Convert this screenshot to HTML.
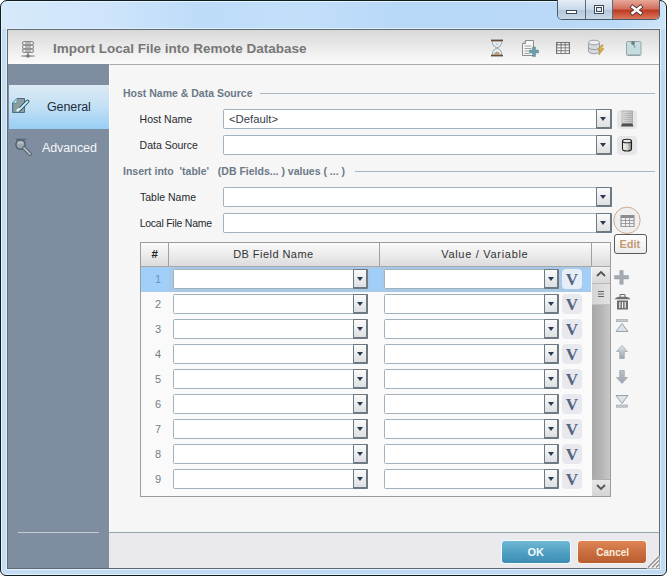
<!DOCTYPE html>
<html><head><meta charset="utf-8"><style>
*{box-sizing:border-box;margin:0;padding:0}
html,body{width:667px;height:576px;overflow:hidden;background:#fff;font-family:"Liberation Sans",sans-serif}
.a{position:absolute}
.t{position:absolute;white-space:nowrap}
.inp{position:absolute;height:20px;border:1px solid #9fb2be;border-radius:1.5px;background:#fff}
.dd{position:absolute;border:1px solid #6d7983;border-right-width:2px;border-bottom-width:2px;border-radius:1px;background:linear-gradient(#fbfbfb,#dedfe2)}
.dd i{position:absolute;left:2.5px;border-left:3.8px solid transparent;border-right:3.8px solid transparent;border-top:4.5px solid #2a3a52}
.vb{position:absolute;width:20px;height:20px;border-radius:4px;background:#e4e7ed;font-family:"Liberation Serif",serif;font-weight:bold;font-size:17px;line-height:20px;text-align:center;color:#56637d}
</style></head><body>
<div class="a" style="left:0px;top:0px;width:667px;height:576px;border:1px solid #101c20;border-radius:7px 7px 6px 6px;box-shadow:inset 0 0 0 1px #e4f4fc;background:linear-gradient(90deg,#c4ddf4,#bed9f3 50%,#c0daf1)"></div>
<div class="a" style="left:2px;top:2px;width:663px;height:27px;border-radius:5px 5px 0 0;background:linear-gradient(90deg,#d6e9fb 0%,#cfe5fb 15%,#bddcf9 30%,#c2dffa 45%,#b8d8f8 60%,#bad9f7 92%,#cfe4f8 100%)"></div>
<div class="a" style="left:7px;top:29px;width:653px;height:540px;border:1px solid #5e6a76;box-shadow:0 0 0 1px #e2f0fc;background:#f4f4f4"></div>
<div class="a" style="left:8px;top:30px;width:651px;height:34px;background:linear-gradient(#d8d8d8,#f3f3f3 75%,#fafafa)"></div>
<div class="a" style="left:8px;top:64px;width:101px;height:504px;background:#7e8d9f"></div>
<div class="a" style="left:109px;top:64px;width:550px;height:468px;background:#f6f6f6;border-top:1px solid #a9a9a9;border-left:1px solid #fdfdfd"></div>
<div class="a" style="left:109px;top:532px;width:550px;height:36px;background:#eaeaee;border-top:1px solid #97a3ad"></div>
<div class="a" style="left:557px;top:0px;width:103px;height:20px;border:1px solid #4b5a6a;border-top:none;border-radius:0 0 5px 5px;overflow:hidden">
<div class="a" style="left:0;top:0;width:27px;height:19px;background:linear-gradient(#e6eef7,#c9d8e8 50%,#b3c6da 51%,#c8d8e8)"></div>
<div class="a" style="left:27px;top:0;width:1px;height:19px;background:#5b6b7b"></div>
<div class="a" style="left:28px;top:0;width:26px;height:19px;background:linear-gradient(#e6eef7,#c9d8e8 50%,#b3c6da 51%,#c8d8e8)"></div>
<div class="a" style="left:54px;top:0;width:1px;height:19px;background:#5b6b7b"></div>
<div class="a" style="left:55px;top:0;width:47px;height:19px;background:linear-gradient(#e8a898,#d2705e 45%,#bf3b22 55%,#d9785c)"></div>
<div class="a" style="left:8px;top:10px;width:11px;height:4px;background:#fff;border:1px solid #3b4a5a"></div>
<div class="a" style="left:36px;top:5px;width:10px;height:9px;border:1px solid #3b4a5a;background:#fff"></div>
<div class="a" style="left:38px;top:7px;width:6px;height:5px;border:1px solid #3b4a5a;background:#dfe8f0"></div>
<svg class="a" style="left:70px;top:3px" width="17" height="14" viewBox="0 0 17 14"><path d="M4.5 4L12.5 10M12.5 4L4.5 10" stroke="#5a3a32" stroke-width="4.2" stroke-linecap="square"/><path d="M4.5 4L12.5 10M12.5 4L4.5 10" stroke="#fff" stroke-width="2.4" stroke-linecap="square"/></svg>
</div>
<div class="t" style="left:53px;top:41.97px;font-size:13.5px;line-height:13.5px;color:#777;font-weight:bold;">Import Local File into Remote Database</div>
<svg class="a" style="left:19px;top:40px" width="20" height="20" viewBox="0 0 20 20">
<g stroke="#8a8a8a" stroke-width="1"><rect x="3.5" y="1.5" width="11" height="3.4" rx="1.2" fill="#b4b4b4"/>
<rect x="3.5" y="5.3" width="11" height="3.4" rx="1.2" fill="#b4b4b4"/>
<rect x="3.5" y="9.1" width="11" height="3.4" rx="1.2" fill="#b4b4b4"/></g>
<g fill="#fff"><circle cx="5.3" cy="3.2" r=".9"/><circle cx="12.7" cy="3.2" r=".9"/><circle cx="5.3" cy="7" r=".9"/><circle cx="12.7" cy="7" r=".9"/><circle cx="5.3" cy="10.8" r=".9"/><circle cx="12.7" cy="10.8" r=".9"/></g>
<rect x="8.4" y="12.5" width="1.4" height="2.5" fill="#888"/>
<ellipse cx="9" cy="16" rx="7.5" ry="1.1" fill="#8a8a8a" opacity=".75"/>
<circle cx="9" cy="16" r="1.7" fill="#777"/>
</svg>
<svg class="a" style="left:490px;top:39px" width="14" height="18" viewBox="0 0 14 18">
<path d="M2.5 2V4.5Q2.5 7 7 9Q11.5 7 11.5 4.5V2Z M2.5 16V13.5Q2.5 11 7 9Q11.5 11 11.5 13.5V16Z" fill="#e4eef6" stroke="#8f9ca6" stroke-width=".9"/>
<path d="M5 4.8Q7 6 9 4.8Z" fill="#b08850"/>
<path d="M4 15.2Q4 13.5 7 12.5Q10 13.5 10 15.2Z" fill="#c09a60"/>
<rect x="1" y="0.6" width="12" height="1.6" fill="#6a4a30"/>
<rect x="1" y="15.8" width="12" height="1.6" fill="#6a4a30"/>
</svg>
<svg class="a" style="left:521px;top:40px" width="18" height="17" viewBox="0 0 18 17">
<path d="M4.5 0.5H12.5V15.5H1.5V3.5Z" fill="#f6f6f6" stroke="#8c8c8c"/>
<path d="M1.5 3.5H4.5V0.5" fill="#dcdcdc" stroke="#8c8c8c"/>
<path d="M3.5 6h7M3.5 8.5h7M3.5 11h6M3.5 13.5h5" stroke="#9a9a9a" stroke-width=".9"/>
<path d="M11.5 7h3v3h3v3h-3v3.5h-3V13h-3v-3h3Z" fill="#6a9eaa" stroke="#5a8a96" stroke-width=".5"/>
</svg>
<svg class="a" style="left:555px;top:41px" width="16" height="14" viewBox="0 0 16 14">
<rect x="1" y="1" width="14" height="12" fill="#727272"/>
<g fill="#f4f4f4"><rect x="2.5" y="2" width="3" height="1.3"/><rect x="6.6" y="2" width="3" height="1.3"/><rect x="10.6" y="2" width="3" height="1.3"/>
<rect x="2.2" y="4.4" width="3.4" height="2"/><rect x="6.5" y="4.4" width="3.3" height="2"/><rect x="10.6" y="4.4" width="3.3" height="2"/>
<rect x="2.2" y="7.3" width="3.4" height="2"/><rect x="6.5" y="7.3" width="3.3" height="2"/><rect x="10.6" y="7.3" width="3.3" height="2"/>
<rect x="2.2" y="10.2" width="3.4" height="1.9"/><rect x="6.5" y="10.2" width="3.3" height="1.9"/><rect x="10.6" y="10.2" width="3.3" height="1.9"/></g>
</svg>
<svg class="a" style="left:587px;top:39px" width="19" height="17" viewBox="0 0 19 17">
<path d="M1.5 3.5v8.5c0 1.7 2.6 2.8 5.5 2.8s5.5-1.1 5.5-2.8V3.5" fill="#d4d9de" stroke="#9aa0a6"/>
<ellipse cx="7" cy="3.5" rx="5.5" ry="2.3" fill="#eceef0" stroke="#9aa0a6"/>
<path d="M1.5 8c0 1.6 2.6 2.6 5.5 2.6s5.5-1 5.5-2.6" fill="none" stroke="#9aa0a6"/>
<path d="M14.5 6l-3.6 5h2.6l-1.8 5 5.2-6.2h-2.7l1.9-3.8Z" fill="#f2bc40" stroke="#a87a28" stroke-width=".6"/>
</svg>
<svg class="a" style="left:626px;top:40px" width="16" height="17" viewBox="0 0 16 17">
<rect x="0.5" y="1.5" width="14.5" height="14" rx="1.2" fill="#c6dde0" stroke="#94a4a8"/>
<path d="M1.5 14.5H14" stroke="#aab8bc"/>
<circle cx="7" cy="3" r="1.9" fill="#6f7f86"/>
<path d="M7.5 4.5L9 7.5" stroke="#7a8a90" stroke-width="1.1"/>
</svg>
<div class="a" style="left:9px;top:85px;width:100px;height:44px;background:linear-gradient(#dceaf4,#c2e0f5 50%,#98cff4)"></div>
<svg class="a" style="left:9px;top:94px" width="24" height="24" viewBox="0 0 24 24">
<path d="M3.5 9L8 4.5H15.5V18.5H3.5Z" fill="#8e9c9e" stroke="#4f6f80" stroke-width="1"/>
<path d="M3.5 9L8 4.5V9Z" fill="#c4f0fc" stroke="#4f8fa0" stroke-width=".8"/>
<path d="M3.5 9.5H4.5V18H3.5Z" fill="#5a8aa0"/>
<path d="M10.5 15.5L18.5 7.5" stroke="#2e4e5e" stroke-width="3.8" stroke-linecap="round"/>
<path d="M10.5 15.5L18.5 7.5" stroke="#bfeefc" stroke-width="1.8" stroke-linecap="round"/>
<path d="M8.5 16.5L10 15" stroke="#e8fbff" stroke-width="2.2" stroke-linecap="round"/>
</svg>
<div class="t" style="left:47px;top:101.42px;font-size:12.5px;line-height:12.5px;color:#1e2c3a;letter-spacing:-0.1px">General</div>
<svg class="a" style="left:9px;top:133px;opacity:.8" width="28" height="28" viewBox="0 0 28 28">
<path d="M6.5 6.5H17" stroke="#4a5864" stroke-width="1.6" opacity=".8"/>
<path d="M6.5 6.5V16.5" stroke="#8a949e" stroke-width="1"/>
<circle cx="11.5" cy="11.5" r="4.6" fill="#a6aeb6" stroke="#3e4c58" stroke-width="1.4"/>
<path d="M9 10.5Q11.5 8.5 14 10.5" stroke="#d8dde2" stroke-width="1.2" fill="none"/>
<path d="M15 15L21 21" stroke="#3e4c58" stroke-width="3.6" stroke-linecap="round"/>
<path d="M15 15L21 21" stroke="#c4c8cc" stroke-width="1.8" stroke-linecap="round"/>
</svg>
<div class="t" style="left:42px;top:142.12px;font-size:12.5px;line-height:12.5px;color:#f2f6fa;letter-spacing:-0.1px">Advanced</div>
<div class="a" style="left:18px;top:532px;width:81px;height:1px;background:#c4ccd4"></div>
<div class="t" style="left:123px;top:87.91px;font-size:10.5px;line-height:10.5px;color:#6b7987;font-weight:bold;">Host Name &amp; Data Source</div>
<div class="a" style="left:260px;top:93px;width:395px;height:1px;background:#a9b7c3"></div>
<div class="t" style="left:123px;top:165.71px;font-size:10.5px;line-height:10.5px;color:#6b7987;font-weight:bold;">Insert into &nbsp;&#39;table&#39; &nbsp; (DB Fields... ) values ( ... )</div>
<div class="a" style="left:355px;top:171px;width:300px;height:1px;background:#a9b7c3"></div>
<div class="t" style="left:139.6px;top:114.11px;font-size:10.5px;line-height:10.5px;color:#26292e;">Host Name</div>
<div class="t" style="left:139.6px;top:139.81px;font-size:10.5px;line-height:10.5px;color:#26292e;">Data Source</div>
<div class="t" style="left:140px;top:191.71px;font-size:10.5px;line-height:10.5px;color:#26292e;">Table Name</div>
<div class="t" style="left:139.7px;top:217.71px;font-size:10.5px;line-height:10.5px;color:#26292e;letter-spacing:-0.25px">Local File Name</div>
<div class="inp" style="left:223px;top:109px;width:389px;height:20px"></div>
<div class="dd" style="left:596px;top:109px;width:16px;height:20px"><i style="top:7px"></i></div>
<div class="inp" style="left:223px;top:135px;width:389px;height:20px"></div>
<div class="dd" style="left:596px;top:135px;width:16px;height:20px"><i style="top:7px"></i></div>
<div class="inp" style="left:223px;top:187px;width:389px;height:20px"></div>
<div class="dd" style="left:596px;top:187px;width:16px;height:20px"><i style="top:7px"></i></div>
<div class="inp" style="left:223px;top:213px;width:389px;height:20px"></div>
<div class="dd" style="left:596px;top:213px;width:16px;height:20px"><i style="top:7px"></i></div>
<div class="t" style="left:229px;top:113.93px;font-size:11.3px;line-height:11.3px;color:#36404c;">&lt;Default&gt;</div>
<div class="a" style="left:617px;top:110px;width:20px;height:19px;background:#e6e6ea;border-radius:4px"></div>
<div class="a" style="left:617px;top:136px;width:20px;height:19px;background:#e6e6ea;border-radius:4px"></div>
<svg class="a" style="left:619px;top:110px" width="16" height="18" viewBox="0 0 16 18">
<defs><linearGradient id="sg" x1="0" x2="1"><stop offset="0" stop-color="#e4e4e4"/><stop offset="1" stop-color="#b8b8b8"/></linearGradient></defs>
<rect x="3" y="1" width="10.5" height="12.5" fill="url(#sg)" stroke="#9a9a9a" stroke-width=".6"/>
<path d="M4 3.5h8.5M4 5.5h8.5M4 7.5h8.5M4 9.5h8.5M4 11.5h8.5" stroke="#a8a8a8" stroke-width=".6"/>
<path d="M3 13.5h10.5l1 3H2Z" fill="#505050"/>
</svg>
<svg class="a" style="left:619px;top:136px" width="16" height="18" viewBox="0 0 16 18">
<defs><linearGradient id="cg" x1="0" x2="1"><stop offset="0" stop-color="#f4f4f0"/><stop offset=".55" stop-color="#d4d4d0"/><stop offset="1" stop-color="#7a7a78"/></linearGradient></defs>
<path d="M3.5 5v8c0 1.2 2 2 4.5 2s4.5-.8 4.5-2V5" fill="url(#cg)" stroke="#202020" stroke-width="1.1"/>
<ellipse cx="8" cy="5" rx="4.5" ry="1.8" fill="#e8e8e4" stroke="#202020" stroke-width="1.1"/>
</svg>
<svg class="a" style="left:612px;top:205px" width="30" height="30" viewBox="0 0 30 30">
<circle cx="15" cy="15.3" r="13.2" fill="#efeff1" stroke="#c8a482" stroke-width=".9"/>
<rect x="8.5" y="10" width="14" height="12" fill="#8c8c8c"/>
<g fill="#f0f0f0"><rect x="9.5" y="13" width="3.5" height="2.2"/><rect x="13.8" y="13" width="3.5" height="2.2"/><rect x="18.1" y="13" width="3.4" height="2.2"/>
<rect x="9.5" y="16" width="3.5" height="2.2"/><rect x="13.8" y="16" width="3.5" height="2.2"/><rect x="18.1" y="16" width="3.4" height="2.2"/>
<rect x="9.5" y="19" width="3.5" height="2.2"/><rect x="13.8" y="19" width="3.5" height="2.2"/><rect x="18.1" y="19" width="3.4" height="2.2"/></g>
</svg>
<div class="a" style="left:614px;top:234px;width:33px;height:20px;border:1px solid #5a5a5a;border-radius:3px;background:linear-gradient(#ffffff,#ececec)"></div>
<div class="t" style="left:619.5px;top:239.49px;font-size:11px;line-height:11px;color:#c49a74;font-weight:600">Edit</div>
<div class="a" style="left:140px;top:242px;width:471px;height:255px;border:1px solid #9c9c9c;background:#fafafa"></div>
<div class="a" style="left:141px;top:243px;width:469px;height:23px;background:linear-gradient(#fbfbfb,#e9e9ea 60%,#dcdcde)"></div>
<div class="a" style="left:141px;top:266px;width:469px;height:1px;background:#a8a8a8"></div>
<div class="a" style="left:168px;top:243px;width:1px;height:23px;background:#a0a0a0"></div>
<div class="a" style="left:379px;top:243px;width:1px;height:23px;background:#a0a0a0"></div>
<div class="a" style="left:591px;top:243px;width:1px;height:23px;background:#a0a0a0"></div>
<div class="t" style="left:151.5px;top:248.57px;font-size:11.5px;line-height:11.5px;color:#222;font-weight:bold;">#</div>
<div class="t" style="left:233.2px;top:248.69px;font-size:11px;line-height:11px;color:#333;letter-spacing:0.45px">DB Field Name</div>
<div class="t" style="left:441.2px;top:248.69px;font-size:11px;line-height:11px;color:#333;letter-spacing:0.7px">Value / Variable</div>
<div class="a" style="left:141px;top:267px;width:450px;height:25px;background:#a8cae8"></div>
<div class="a" style="left:141px;top:268px;width:28px;height:23px;background:#a0d0fa"></div>
<div class="a" style="left:370px;top:269px;width:12px;height:21px;background:#a0d0fa"></div>
<div class="a" style="left:583px;top:269px;width:8px;height:21px;background:#a0d0fa"></div>
<div class="t" style="left:155px;top:274.19px;font-size:11px;line-height:11px;color:#6d8fb0;">1</div>
<div class="inp" style="left:173px;top:269px;width:195px;height:20px"></div>
<div class="dd" style="left:353px;top:269px;width:15px;height:20px"><i style="top:7px"></i></div>
<div class="inp" style="left:384px;top:269px;width:175px;height:20px"></div>
<div class="dd" style="left:544px;top:269px;width:15px;height:20px"><i style="top:7px"></i></div>
<div class="vb" style="left:562px;top:269px;background:#e6eef8;line-height:22px">V</div>
<div class="t" style="left:155px;top:299.19px;font-size:11px;line-height:11px;color:#747d87;">2</div>
<div class="inp" style="left:173px;top:294px;width:195px;height:20px"></div>
<div class="dd" style="left:353px;top:294px;width:15px;height:20px"><i style="top:7px"></i></div>
<div class="inp" style="left:384px;top:294px;width:175px;height:20px"></div>
<div class="dd" style="left:544px;top:294px;width:15px;height:20px"><i style="top:7px"></i></div>
<div class="vb" style="left:562px;top:294px;background:#e8e9ee;line-height:22px">V</div>
<div class="t" style="left:155px;top:324.19px;font-size:11px;line-height:11px;color:#747d87;">3</div>
<div class="inp" style="left:173px;top:319px;width:195px;height:20px"></div>
<div class="dd" style="left:353px;top:319px;width:15px;height:20px"><i style="top:7px"></i></div>
<div class="inp" style="left:384px;top:319px;width:175px;height:20px"></div>
<div class="dd" style="left:544px;top:319px;width:15px;height:20px"><i style="top:7px"></i></div>
<div class="vb" style="left:562px;top:319px;background:#e8e9ee;line-height:22px">V</div>
<div class="t" style="left:155px;top:349.19px;font-size:11px;line-height:11px;color:#747d87;">4</div>
<div class="inp" style="left:173px;top:344px;width:195px;height:20px"></div>
<div class="dd" style="left:353px;top:344px;width:15px;height:20px"><i style="top:7px"></i></div>
<div class="inp" style="left:384px;top:344px;width:175px;height:20px"></div>
<div class="dd" style="left:544px;top:344px;width:15px;height:20px"><i style="top:7px"></i></div>
<div class="vb" style="left:562px;top:344px;background:#e8e9ee;line-height:22px">V</div>
<div class="t" style="left:155px;top:374.19px;font-size:11px;line-height:11px;color:#747d87;">5</div>
<div class="inp" style="left:173px;top:369px;width:195px;height:20px"></div>
<div class="dd" style="left:353px;top:369px;width:15px;height:20px"><i style="top:7px"></i></div>
<div class="inp" style="left:384px;top:369px;width:175px;height:20px"></div>
<div class="dd" style="left:544px;top:369px;width:15px;height:20px"><i style="top:7px"></i></div>
<div class="vb" style="left:562px;top:369px;background:#e8e9ee;line-height:22px">V</div>
<div class="t" style="left:155px;top:399.19px;font-size:11px;line-height:11px;color:#747d87;">6</div>
<div class="inp" style="left:173px;top:394px;width:195px;height:20px"></div>
<div class="dd" style="left:353px;top:394px;width:15px;height:20px"><i style="top:7px"></i></div>
<div class="inp" style="left:384px;top:394px;width:175px;height:20px"></div>
<div class="dd" style="left:544px;top:394px;width:15px;height:20px"><i style="top:7px"></i></div>
<div class="vb" style="left:562px;top:394px;background:#e8e9ee;line-height:22px">V</div>
<div class="t" style="left:155px;top:424.19px;font-size:11px;line-height:11px;color:#747d87;">7</div>
<div class="inp" style="left:173px;top:419px;width:195px;height:20px"></div>
<div class="dd" style="left:353px;top:419px;width:15px;height:20px"><i style="top:7px"></i></div>
<div class="inp" style="left:384px;top:419px;width:175px;height:20px"></div>
<div class="dd" style="left:544px;top:419px;width:15px;height:20px"><i style="top:7px"></i></div>
<div class="vb" style="left:562px;top:419px;background:#e8e9ee;line-height:22px">V</div>
<div class="t" style="left:155px;top:449.19px;font-size:11px;line-height:11px;color:#747d87;">8</div>
<div class="inp" style="left:173px;top:444px;width:195px;height:20px"></div>
<div class="dd" style="left:353px;top:444px;width:15px;height:20px"><i style="top:7px"></i></div>
<div class="inp" style="left:384px;top:444px;width:175px;height:20px"></div>
<div class="dd" style="left:544px;top:444px;width:15px;height:20px"><i style="top:7px"></i></div>
<div class="vb" style="left:562px;top:444px;background:#e8e9ee;line-height:22px">V</div>
<div class="t" style="left:155px;top:474.19px;font-size:11px;line-height:11px;color:#747d87;">9</div>
<div class="inp" style="left:173px;top:469px;width:195px;height:20px"></div>
<div class="dd" style="left:353px;top:469px;width:15px;height:20px"><i style="top:7px"></i></div>
<div class="inp" style="left:384px;top:469px;width:175px;height:20px"></div>
<div class="dd" style="left:544px;top:469px;width:15px;height:20px"><i style="top:7px"></i></div>
<div class="vb" style="left:562px;top:469px;background:#e8e9ee;line-height:22px">V</div>
<div class="a" style="left:592px;top:267px;width:18px;height:229px;background:linear-gradient(90deg,#a8a8a8,#b4b4b4 50%,#c8c8c8)"></div>
<div class="a" style="left:592px;top:267px;width:18px;height:17px;background:linear-gradient(#f0f0f0,#d8d8d8);border-bottom:1px solid #b8b8b8"></div>
<svg class="a" style="left:595px;top:270px" width="12" height="8" viewBox="0 0 12 8"><path d="M2 6l4-4 4 4" fill="none" stroke="#555" stroke-width="1.8"/></svg>
<div class="a" style="left:592px;top:284px;width:18px;height:21px;background:linear-gradient(90deg,#d4d4d4,#e2e2e2);border-bottom:1px solid #c0c0c0"></div>
<svg class="a" style="left:597px;top:290px" width="8" height="8" viewBox="0 0 8 8"><path d="M1 1.5h6M1 4h6M1 6.5h6" stroke="#666" stroke-width="1"/></svg>
<div class="a" style="left:592px;top:479px;width:18px;height:17px;background:linear-gradient(#e8e8e8,#d4d4d4);border-top:1px solid #b0b0b0"></div>
<svg class="a" style="left:595px;top:483px" width="12" height="8" viewBox="0 0 12 8"><path d="M2 2l4 4 4-4" fill="none" stroke="#555" stroke-width="1.8"/></svg>
<svg class="a" style="left:614px;top:270px" width="16" height="15" viewBox="0 0 16 15"><path d="M5.8 0.5h3.4v5h5.3v3.4H9.2v5.4H5.8V8.9H0.5V5.5h5.3Z" fill="#a4acb4" stroke="#8e98a0" stroke-width=".5"/></svg>
<svg class="a" style="left:614px;top:293px" width="17" height="17" viewBox="0 0 17 17">
<path d="M0.5 6.2Q2 4 5 3.8H12Q15 4 16.5 6.2Z" fill="#6e6e6e"/>
<path d="M6 4V2.2Q6 1.5 7 1.5H10Q11 1.5 11 2.2V4" fill="none" stroke="#6e6e6e" stroke-width="1.1"/>
<rect x="3" y="7.5" width="11" height="9" fill="#6e6e6e"/>
<path d="M5.8 9v6M8.5 9v6M11.2 9v6" stroke="#f4f4f4" stroke-width="1.2"/>
</svg>
<svg class="a" style="left:614px;top:319px" width="16" height="14" viewBox="0 0 16 14"><rect x="2.5" y="0.5" width="11" height="2.2" fill="#c4ccd4" stroke="#98a2aa" stroke-width=".6"/><path d="M8 4.5L14 12.5H2Z" fill="#dde2e8" stroke="#98a2aa"/></svg>
<svg class="a" style="left:614px;top:345px" width="16" height="14" viewBox="0 0 16 14"><defs><linearGradient id="ag" x1="0" y1="0" x2="0" y2="1"><stop offset="0" stop-color="#dfe5ea"/><stop offset="1" stop-color="#9aa6b0"/></linearGradient></defs><path d="M8 0.5L13.5 6.5H10.3V13.5H5.7V6.5H2.5Z" fill="url(#ag)" stroke="#9aa4ac" stroke-width=".7"/></svg>
<svg class="a" style="left:614px;top:370px" width="16" height="14" viewBox="0 0 16 14"><defs><linearGradient id="ag2" x1="0" y1="0" x2="0" y2="1"><stop offset="0" stop-color="#b8c2ca"/><stop offset="1" stop-color="#9aa6b0"/></linearGradient></defs><path d="M5.7 0.5H10.3V7.5H13.5L8 13.5L2.5 7.5H5.7Z" fill="url(#ag2)" stroke="#9aa4ac" stroke-width=".7"/></svg>
<svg class="a" style="left:614px;top:394px" width="16" height="14" viewBox="0 0 16 14"><path d="M2 1.5H14L8 9.5Z" fill="#dde2e8" stroke="#98a2aa"/><rect x="2.5" y="11" width="11" height="2.2" fill="#c4ccd4" stroke="#98a2aa" stroke-width=".6"/></svg>
<div class="a" style="left:501px;top:540px;width:70px;height:24px;border-radius:4px;background:#f4fbff"></div>
<div class="a" style="left:502px;top:541px;width:68px;height:22px;border-radius:3px;background:linear-gradient(#6fb8d4,#4c9bc0 60%,#3f8db4)"></div>
<div class="t" style="left:527.5px;top:547.49px;font-size:11px;line-height:11px;color:#eef9ff;font-weight:bold;">OK</div>
<div class="a" style="left:577px;top:540px;width:70px;height:24px;border-radius:4px;background:#fff4ea"></div>
<div class="a" style="left:578px;top:541px;width:68px;height:22px;border-radius:3px;background:linear-gradient(#dd8556,#c96d3e 55%,#b75d30)"></div>
<div class="t" style="left:596.3px;top:548.24px;font-size:10px;line-height:10px;color:#fbeedc;font-weight:bold;">Cancel</div>
<svg class="a" style="left:646px;top:554px" width="14" height="15" viewBox="0 0 14 15"><path d="M13.5 1.5L0.5 14.5H13.5Z" fill="#f4f4f6"/><path d="M13 2.5L2 13.5M13 6.5L6 13.5M13 10.5L10 13.5" stroke="#8c8c8c" stroke-width="1.2"/></svg>
</body></html>
